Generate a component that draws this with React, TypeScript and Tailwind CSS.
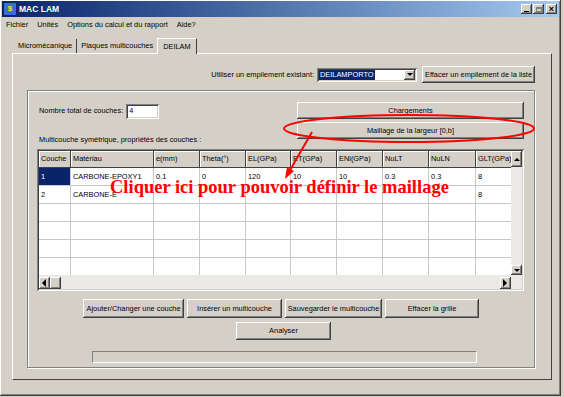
import React from "react";

const raised =
  "bg-[#d4d0c8] shadow-[inset_-1px_-1px_#404040,inset_1px_1px_#ffffff,inset_-2px_-2px_#808080]";
const sunken =
  "shadow-[inset_1px_1px_#808080,inset_-1px_-1px_#ffffff,inset_2px_2px_#404040,inset_-2px_-2px_#d4d0c8]";

const cols = [32, 83, 46, 46, 45, 46, 46, 46, 47, 37];
const headers = ["Couche", "Matériau", "e(mm)", "Theta(°)", "EL(GPa)", "ET(GPa)", "ENl(GPa)", "NuLT", "NuLN", "GLT(GPa)"];
const rows: string[][] = [
  ["1", "CARBONE-EPOXY1", "0.1", "0", "120", "10", "10", "0.3", "0.3", "8"],
  ["2", "CARBONE-E", "", "", "", "", "", "", "", "8"],
  ["", "", "", "", "", "", "", "", "", ""],
  ["", "", "", "", "", "", "", "", "", ""],
  ["", "", "", "", "", "", "", "", "", ""],
  ["", "", "", "", "", "", "", "", "", ""],
];

function Btn({ children, className }: { children: React.ReactNode; className: string }) {
  return (
    <div className={`${raised} flex items-center justify-center text-black whitespace-nowrap ${className}`}>{children}</div>
  );
}

function Arrow({ dir }: { dir: "up" | "down" | "left" | "right" }) {
  const v = dir === "up" || dir === "down";
  const pts =
    dir === "up" ? "1,4 4,1 7,4" : dir === "down" ? "1,1 4,4 7,1" : dir === "left" ? "4,0 0,4 4,8" : "0,0 4,4 0,8";
  return (
    <svg width={v ? 8 : 5} height={v ? 5 : 8} viewBox={v ? "0 0 8 5" : "0 0 5 8"}>
      <polygon points={pts} fill="#000" />
    </svg>
  );
}

export default function App() {
  return (
    <div className="relative w-[564px] h-[397px] bg-[#d4d0c8] font-['Liberation_Sans',Arial,sans-serif] text-[7.4px] text-black overflow-hidden">
      <div className="w-[561px] h-[396px] flex flex-col shadow-[inset_-1px_-1px_#404040,inset_1px_1px_#ffffff,inset_-2px_-2px_#808080]">
        {/* Title bar */}
        <div className="mx-[2px] mt-[1px] h-[16px] flex items-center bg-gradient-to-r from-[#0a246a] to-[#a6caf0]">
          <div className="ml-[2px] w-[12px] h-[12px] bg-[#3a6fd0] flex items-center justify-center text-[8px] font-bold text-yellow-300">$</div>
          <span className="ml-[3px] text-white font-bold text-[8.5px]">MAC LAM</span>
          <div className="ml-auto mr-[2px] flex gap-[1px]">
            <Btn className="w-[11px] h-[10px] leading-none">
              <span className="mt-[4px] block w-[5px] h-[1px] bg-black" />
            </Btn>
            <Btn className="w-[11px] h-[10px] mr-[1px]">
              <span className="block w-[6px] h-[5px] border border-[#808080] border-t-2" />
            </Btn>
            <Btn className="w-[11px] h-[10px] text-[9px] font-bold leading-none">×</Btn>
          </div>
        </div>
        {/* Menu */}
        <div className="h-[13px] mt-[1px] flex items-center pl-[6px] gap-[9px]">
          <span>Fichier</span>
          <span>Unités</span>
          <span>Options du calcul et du rapport</span>
          <span>Aide?</span>
        </div>
        {/* Tabs */}
        <div className="mt-[6px] h-[16px] pl-[14px] flex items-end">
          <div className="h-[14px] px-[4px] flex items-center border-r border-[#404040]">Micromécanique</div>
          <div className="h-[14px] px-[4px] flex items-center">Plaques multicouches</div>
          <div className="h-[16px] px-[5px] flex items-center border-t border-l border-white border-r border-r-[#404040] bg-[#d4d0c8] relative top-[1px]">DEILAM</div>
        </div>
        {/* Tab panel */}
        <div className="ml-[12px] w-[540px] h-[327px] border-t border-l border-white border-r border-b border-r-[#404040] border-b-[#404040] flex flex-col">
          <div className="mt-[12px] h-[17px] flex items-center justify-end pr-[16px]">
            <span className="mr-[3px] whitespace-nowrap">Utiliser un empilement existant:</span>
            <div className={`${sunken} bg-white w-[100px] h-[14px] flex items-center pl-[2px] pr-[2px]`}>
              <span className="bg-[#0a246a] text-white px-[1px] leading-[10px]">DEILAMPORTO</span>
              <Btn className="ml-auto w-[11px] h-[10px]">
                <Arrow dir="down" />
              </Btn>
            </div>
            <Btn className="ml-[5px] w-[113px] h-[17px]">Effacer un empilement de la liste</Btn>
          </div>
          {/* Group box */}
          <div className="ml-[14px] mt-[7px] w-[508px] h-[278px] border border-[#808080] shadow-[1px_1px_0_#ffffff,inset_1px_1px_0_#ffffff] flex flex-col">
            <div className="flex mt-[11px] h-[43px]">
              <div className="w-[269px] pl-[11px] flex flex-col">
                <div className="flex items-center h-[16px] mt-[1px]">
                  <span className="whitespace-nowrap">Nombre total de couches:</span>
                  <div className={`${sunken} ml-[3px] bg-white w-[33px] h-[15px] flex items-center pl-[3px]`}>4</div>
                </div>
                <div className="mt-[16px] leading-[10px] whitespace-nowrap">Multicouche symétrique, propriétés des couches :</div>
              </div>
              <div className="flex flex-col gap-[3px]">
                <Btn className="w-[227px] h-[17px]">Chargements</Btn>
                <Btn className="w-[227px] h-[17px]">Maillage de la largeur [0,b]</Btn>
              </div>
            </div>
            {/* Table */}
            <div className={`ml-[9px] mt-[4px] w-[487px] h-[142px] p-[2px] bg-[#ebe9e5] ${sunken} flex flex-col`}>
              <div className="flex h-[124px]">
                <div className="w-[474px] bg-white flex flex-col overflow-hidden">
                  <div className="flex h-[17px] shrink-0 bg-[#d4d0c8]">
                    {headers.map((h, i) => (
                      <div
                        key={i}
                        style={{ width: cols[i] }}
                        className="h-[17px] shrink-0 border-r border-b border-[#404040] shadow-[inset_1px_1px_#ffffff] flex items-center pl-[2px] whitespace-nowrap overflow-hidden"
                      >
                        {h}
                      </div>
                    ))}
                  </div>
                  {rows.map((r, ri) => (
                    <div key={ri} className="flex h-[18px] shrink-0">
                      {r.map((c, ci) => (
                        <div
                          key={ci}
                          style={{ width: cols[ci] }}
                          className={`h-[18px] shrink-0 border-r border-b border-[#c8c8c8] flex items-center pl-[2px] whitespace-nowrap overflow-hidden ${
                            ri === 0 && ci === 0 ? "bg-[#0a246a] text-white" : ""
                          }`}
                        >
                          {c}
                        </div>
                      ))}
                    </div>
                  ))}
                </div>
                <div className="w-[11px] flex flex-col justify-between bg-[#ebe9e5]">
                  <Btn className="w-[11px] h-[16px]">
                    <Arrow dir="up" />
                  </Btn>
                  <Btn className="w-[11px] h-[10px]">
                    <Arrow dir="down" />
                  </Btn>
                </div>
              </div>
              <div className="flex h-[12px] mt-[2px]">
                <Btn className="w-[11px] h-[12px]">
                  <Arrow dir="left" />
                </Btn>
                <Btn className="w-[11px] h-[12px]">
                  <span />
                </Btn>
                <div className="flex-1" />
                <Btn className="w-[11px] h-[12px] mr-[11px]">
                  <Arrow dir="right" />
                </Btn>
              </div>
            </div>
            {/* Buttons */}
            <div className="flex ml-[55px] mt-[8px] gap-[3px]">
              <Btn className="w-[101px] h-[19px]">Ajouter/Changer une couche</Btn>
              <Btn className="w-[95px] h-[19px]">Insérer un multicouche</Btn>
              <Btn className="w-[97px] h-[19px]">Sauvegarder le multicouche</Btn>
              <Btn className="w-[94px] h-[19px]">Effacer la grille</Btn>
            </div>
            <div className="flex ml-[208px] mt-[4px]">
              <Btn className="w-[95px] h-[18px]">Analyser</Btn>
            </div>
            <div className="ml-[64px] mt-[11px] w-[385px] h-[12px] border-t border-l border-[#808080] border-r border-b border-r-white border-b-white" />
          </div>
        </div>
      </div>

      {/* Annotation overlays */}
      <svg className="absolute left-0 top-0 pointer-events-none" width="564" height="397">
        <ellipse cx="409" cy="128.5" rx="125" ry="13.5" fill="none" stroke="#ff0000" strokeWidth="2" />
        <line x1="312" y1="132" x2="289" y2="172" stroke="#ff0000" strokeWidth="2" />
        <polygon points="285,179 287,167 294,171" fill="#ff0000" />
      </svg>
      <div className="absolute left-[110px] top-[177px] font-['Liberation_Serif',serif] font-bold text-[18.5px] leading-[20px] text-[#ff0000] whitespace-nowrap">
        Cliquer ici pour pouvoir définir le maillage
      </div>
    </div>
  );
}
